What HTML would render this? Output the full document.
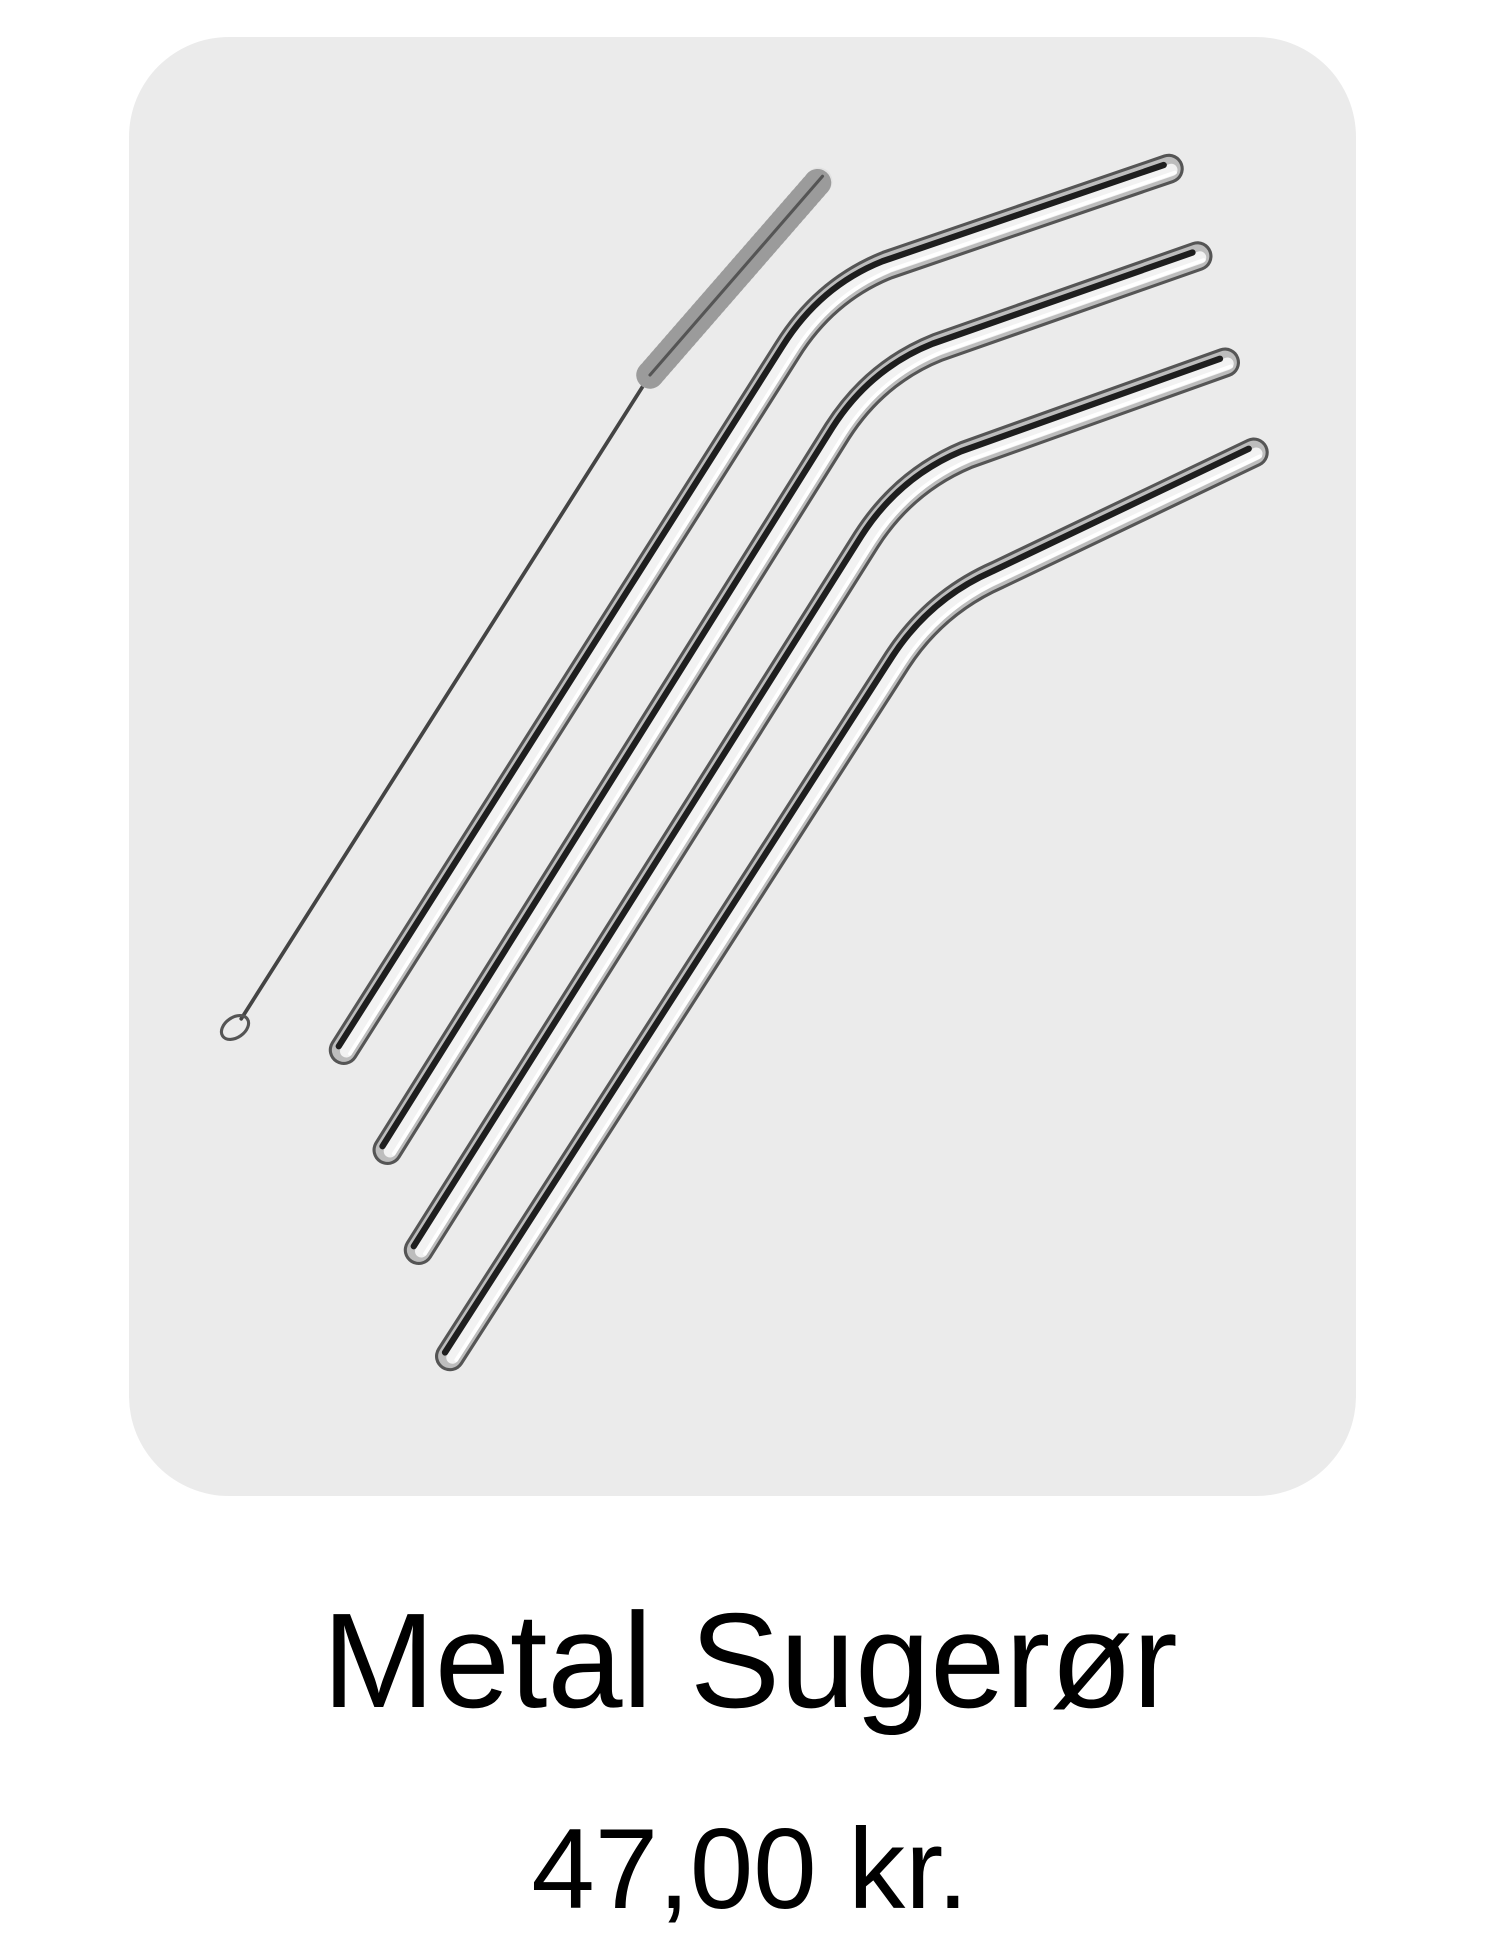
<!DOCTYPE html>
<html><head><meta charset="utf-8"><style>
html,body{margin:0;padding:0;background:#fff;width:1500px;height:1959px;overflow:hidden;font-family:"Liberation Sans",Arial,sans-serif}
.card{position:absolute;left:129px;top:37px;width:1227px;height:1459px;background:#ebebeb;border-radius:100px}
svg{position:absolute;left:0;top:0}
.t{position:absolute;left:0;width:1500px;text-align:center;color:#000}
.t1{top:1586px;font-size:135px;line-height:150px}
.t2{top:1805px;font-size:114px;line-height:130px}
</style></head><body>
<div class="card"></div>
<svg width="1500" height="1959" viewBox="0 0 1200 1567.2">
<defs>
<path id="p1" d="M275,840 L630,280 Q660,232 710,212 L935,135"/>
<path id="p2" d="M310,920 L670,345 Q700,298 750,278 L958,205"/>
<path id="p3" d="M335,1000 L693,432 Q723,385 773,364 L980,290"/>
<path id="p4" d="M360,1085 L718,528 Q748,482 798,460 L1003,362"/>
<g id="straws">
<use href="#p1"/><use href="#p2"/><use href="#p3"/><use href="#p4"/>
</g>
</defs>
<g fill="none" stroke-linecap="round">
<path d="M193,815 L520,300" stroke="#444" stroke-width="3"/>
<ellipse cx="188" cy="822" rx="12" ry="8" transform="rotate(-35 188 822)" stroke="#555" stroke-width="2.5"/>
<path d="M520,300 L655,145" stroke="#e2e2e2" stroke-width="22"/>
<path d="M520,300 L655,145" stroke="#8a8a8a" stroke-width="22" stroke-dasharray="1.5 3" opacity="0.8"/>
<path d="M520,300 L658,141" stroke="#555" stroke-width="2.5"/>
</g>
<g fill="none" stroke-linecap="round" stroke-linejoin="round">
<use href="#straws" stroke="#555" stroke-width="24"/>
<use href="#straws" stroke="#bdbdbd" stroke-width="19"/>
<use href="#straws" stroke="#f2f2f2" stroke-width="10" transform="translate(2,1)"/>
<use href="#straws" stroke="#1e1e1e" stroke-width="5" transform="translate(-4,-3)"/>
<use href="#straws" stroke="#ffffff" stroke-width="3" transform="translate(5,3)"/>
</g>
</svg>
<div class="t t1">Metal Sugerør</div>
<div class="t t2">47,00 kr.</div>
</body></html>
